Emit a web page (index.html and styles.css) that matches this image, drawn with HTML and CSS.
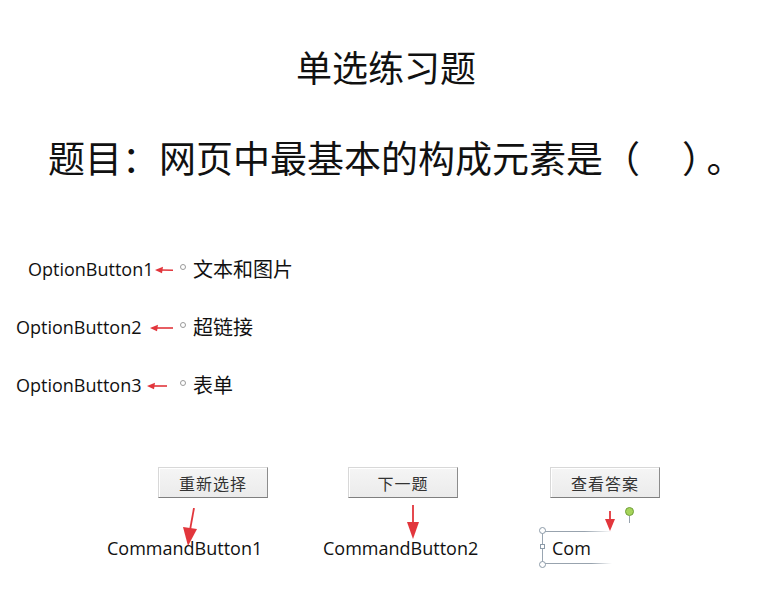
FILE: index.html
```html
<!DOCTYPE html>
<html lang="zh-CN">
<head>
<meta charset="utf-8">
<title>单选练习题</title>
<link rel="stylesheet" href="styles.css">
</head>
<body>
<main class="slide">
  <h1 class="title">单选练习题</h1>
  <p class="question">题目：网页中最基本的构成元素是（<span class="blank"></span><span class="close-paren">）</span>。</p>

  <section class="options">
    <div class="opt-row">
      <div class="opt-name opt-name--first">
        <span class="ctl-label">OptionButton1</span>
        <svg class="arrow-left arrow-left--a" width="18" height="8" viewBox="0 0 18 8"><line x1="6" y1="4" x2="18" y2="4.3" stroke="#e2363c" stroke-width="1.6"/><polygon points="0,4 8,0.8 7,7.2" fill="#e2363c"/></svg>
      </div>
      <span class="radio"></span>
      <span class="opt-text">文本和图片</span>
    </div>
    <div class="opt-row">
      <div class="opt-name">
        <span class="ctl-label">OptionButton2</span>
        <svg class="arrow-left arrow-left--b" width="23" height="8" viewBox="0 0 23 8"><line x1="6" y1="4" x2="23" y2="4" stroke="#e2363c" stroke-width="1.6"/><polygon points="0,4 8,0.8 7,7.2" fill="#e2363c"/></svg>
      </div>
      <span class="radio"></span>
      <span class="opt-text">超链接</span>
    </div>
    <div class="opt-row">
      <div class="opt-name">
        <span class="ctl-label">OptionButton3</span>
        <svg class="arrow-left arrow-left--c" width="20" height="8" viewBox="0 0 20 8"><line x1="6" y1="4" x2="20" y2="4" stroke="#e2363c" stroke-width="1.6"/><polygon points="0,4 8,0.8 7,7.2" fill="#e2363c"/></svg>
      </div>
      <span class="radio"></span>
      <span class="opt-text">表单</span>
    </div>
  </section>

  <section class="commands">
    <div class="btn-row">
      <button class="cmd-btn" type="button">重新选择</button>
      <button class="cmd-btn" type="button">下一题</button>
      <button class="cmd-btn" type="button">查看答案</button>
    </div>
    <div class="name-row">
      <span class="ctl-label">CommandButton1</span>
      <span class="ctl-label">CommandButton2</span>
      <div class="selbox">
        <span class="ctl-label">Com</span>
        <span class="handle handle--tl"></span>
        <span class="handle handle--sq"></span>
        <span class="handle handle--bl"></span>
        <span class="rot-stem"></span>
        <span class="rot-handle"></span>
      </div>
    </div>
    <svg class="arrow-down arrow-down--1" width="16" height="38" viewBox="0 0 16 38"><line x1="12" y1="0" x2="8" y2="22" stroke="#e2363c" stroke-width="1.8"/><polygon points="1,19 15,21 6,38" fill="#e2363c"/></svg>
    <svg class="arrow-down arrow-down--2" width="14" height="34" viewBox="0 0 14 34"><line x1="7" y1="0" x2="7" y2="20" stroke="#e2363c" stroke-width="1.8"/><polygon points="1,17 13,17 7,34" fill="#e2363c"/></svg>
    <svg class="arrow-down arrow-down--3" width="12" height="20" viewBox="0 0 12 20"><line x1="6" y1="0" x2="6" y2="10" stroke="#e2363c" stroke-width="1.8"/><polygon points="1,8 11,8 6,20" fill="#e2363c"/></svg>
  </section>
</main>
</body>
</html>
```

FILE: styles.css
```css
html, body {
  margin: 0;
  padding: 0;
  background: #ffffff;
}

.slide {
  width: 759px;
  height: 594px;
  overflow: hidden;
  color: #111111;
  font-family: "Noto Sans CJK SC", "Noto Sans", sans-serif;
}

.title {
  margin: 0;
  padding: 48px 0 0 13px;
  font-size: 36px;
  line-height: 36px;
  font-weight: 400;
  text-align: center;
}

.question {
  margin: 55px 0 0 0;
  padding-left: 48px;
  font-size: 37px;
  line-height: 37px;
  white-space: nowrap;
}

.blank {
  display: inline-block;
  width: 42px;
}

.close-paren {
  margin-right: 6px;
}

.options {
  margin-top: 64px;
}

.opt-row {
  display: grid;
  grid-template-columns: 180px 6px auto;
  align-items: center;
  height: 58px;
}

.opt-name {
  display: flex;
  align-items: center;
  padding-left: 16px;
}

.opt-name--first {
  padding-left: 28px;
}

.ctl-label {
  font-family: "Open Sans", "Noto Sans", sans-serif;
  font-size: 18px;
  line-height: 24px;
  color: #111111;
  white-space: nowrap;
}

.opt-name .ctl-label {
  display: inline-block;
  width: 127px;
}

.arrow-left {
  display: block;
  margin-top: 1px;
}

.arrow-left--b {
  margin-left: 7px;
}

.arrow-left--c {
  margin-left: 4px;
}

.radio {
  width: 6px;
  height: 6px;
  box-sizing: border-box;
  border: 1px solid #9a9a9a;
  border-radius: 50%;
  margin-top: -4px;
}

.opt-text {
  margin-left: 7px;
  font-size: 20px;
  line-height: 24px;
}

.commands {
  position: relative;
  margin-top: 53px;
}

.btn-row {
  display: grid;
  grid-template-columns: 190px 202px 110px;
  padding-left: 158px;
}

.cmd-btn {
  width: 110px;
  height: 31px;
  padding: 0;
  margin: 0;
  box-sizing: border-box;
  font-family: "Noto Sans CJK SC", sans-serif;
  font-size: 16px;
  letter-spacing: 1px;
  color: #333333;
  background: linear-gradient(#f5f5f5, #ebebeb);
  border-style: solid;
  border-width: 1px;
  border-color: #d8d8d8 #8c8c8c #7f7f7f #d8d8d8;
  box-shadow: inset 1px 1px 0 #ffffff;
}

.name-row {
  display: grid;
  grid-template-columns: 216px 219px auto;
  align-items: center;
  padding-left: 107px;
  margin-top: 33px;
}

.selbox {
  position: relative;
  width: 70px;
  height: 33px;
  box-sizing: border-box;
  border-left: 1px solid #9aa6b2;
  display: flex;
  align-items: center;
  padding-left: 9px;
  background:
    linear-gradient(90deg, #98a3ae 0, #98a3ae 60%, rgba(152,163,174,0) 100%) top left / 100% 1px no-repeat,
    linear-gradient(90deg, #98a3ae 0, #98a3ae 70%, rgba(152,163,174,0) 100%) bottom left / 100% 1px no-repeat;
}

.handle {
  position: absolute;
  left: -4px;
  width: 7px;
  height: 7px;
  box-sizing: border-box;
  border: 1px solid #8c9aa8;
  background: #ffffff;
  border-radius: 50%;
}

.handle--tl {
  top: -4px;
}

.handle--bl {
  bottom: -4px;
}

.handle--sq {
  top: 13px;
  left: -3px;
  width: 5px;
  height: 5px;
  border-radius: 0;
}

.rot-stem {
  position: absolute;
  left: 86px;
  top: -15px;
  width: 1px;
  height: 7px;
  background: #98a3ae;
}

.rot-handle {
  position: absolute;
  left: 82px;
  top: -24px;
  width: 9px;
  height: 9px;
  box-sizing: border-box;
  border: 1px solid #6f9f38;
  background: #a6d45a;
  border-radius: 50%;
}

.arrow-down {
  position: absolute;
  display: block;
}

.arrow-down--1 {
  left: 182px;
  top: 41px;
}

.arrow-down--2 {
  left: 406px;
  top: 38px;
}

.arrow-down--3 {
  left: 604px;
  top: 44px;
}
```
